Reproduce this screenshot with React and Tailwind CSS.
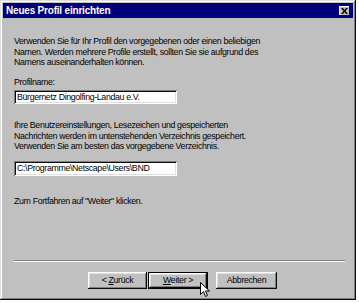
export default function App() {
  const font = { fontFamily: '"Liberation Sans", Arial, sans-serif' };
  const raised =
    "shadow-[inset_-1px_-1px_#0a0a0a,inset_1px_1px_#ffffff,inset_-2px_-2px_#808080,inset_2px_2px_#dfdfdf]";
  const sunken =
    "shadow-[inset_1px_1px_#808080,inset_-1px_-1px_#ffffff,inset_2px_2px_#0a0a0a,inset_-2px_-2px_#dfdfdf]";
  return (
    <div className="w-[359px] h-[303px] bg-white overflow-hidden" style={font}>
      <div className="w-[356px] h-[300px] bg-[#c0c0c0] p-[3px] flex flex-col shadow-[inset_-1px_-1px_#0a0a0a,inset_1px_1px_#dfdfdf,inset_-2px_-2px_#808080,inset_2px_2px_#ffffff]">
        {/* title bar */}
        <div className="h-[15px] bg-[#00007b] flex items-center justify-between pl-[3px] pr-[3px]">
          <span className="text-white font-bold text-[10px] leading-none tracking-[-0.2px]">Neues Profil einrichten</span>
          <div className={"w-[11px] h-[10px] bg-[#c0c0c0] flex items-center justify-center shadow-[inset_-1px_-1px_#0a0a0a,inset_1px_1px_#ffffff]"}>
            <svg width="7" height="6" viewBox="0 0 7 6">
              <path d="M0 0h2l1.5 2L5 0h2L4.5 3L7 6H5L3.5 4L2 6H0l2.5-3z" fill="#000" />
            </svg>
          </div>
        </div>

        {/* body */}
        <div className="flex-1 flex flex-col px-[11px] pt-[18px] text-[8.8px] leading-[10.5px] tracking-[-0.35px] text-black">
          <p>
            Verwenden Sie für Ihr Profil den vorgegebenen oder einen beliebigen
            <br />
            Namen. Werden mehrere Profile erstellt, sollten Sie sie aufgrund des
            <br />
            Namens auseinanderhalten können.
          </p>
          <p className="mt-[9px]">Profilname:</p>
          <div className={"mt-[3px] w-[163px] h-[14px] bg-white flex items-center pl-[3px] " + sunken}>
            Bürgernetz Dingolfing-Landau e.V.
          </div>
          <p className="mt-[16px]">
            Ihre Benutzereinstellungen, Lesezeichen und gespeicherten
            <br />
            Nachrichten werden im untenstehenden Verzeichnis gespeichert.
            <br />
            Verwenden Sie am besten das vorgegebene Verzeichnis.
          </p>
          <div className={"mt-[9px] w-[163px] h-[15px] bg-white flex items-center pl-[3px] " + sunken}>
            C:\Programme\Netscape\Users\BND
          </div>
          <p className="mt-[20px]">Zum Fortfahren auf "Weiter" klicken.</p>

          <div className="mt-auto mb-[8px]">
            <div className="h-[2px] w-[331px] border-t border-[#808080] border-b border-b-white" />
            <div className="flex mt-[10px] pl-[74px] relative">
              <div className={"w-[59px] h-[17px] flex items-center justify-center " + raised}>
                &lt; <span className="underline ml-[2px]">Z</span>urück
              </div>
              <div className={"ml-[1px] w-[60px] h-[17px] border border-black flex items-center justify-center " + raised}>
                <span className="underline">W</span>eiter &gt;
              </div>
              <div className={"ml-[8px] w-[61px] h-[17px] flex items-center justify-center " + raised}>
                Abbrechen
              </div>
              <svg className="absolute left-[186px] top-[10px]" width="10" height="16" viewBox="0 0 10 16">
                <path d="M0.5 0.5v12l3-3 2 5 2-1-2-4.5h4z" fill="#fff" stroke="#000" strokeWidth="1" />
              </svg>
            </div>
          </div>
        </div>
      </div>
    </div>
  );
}
